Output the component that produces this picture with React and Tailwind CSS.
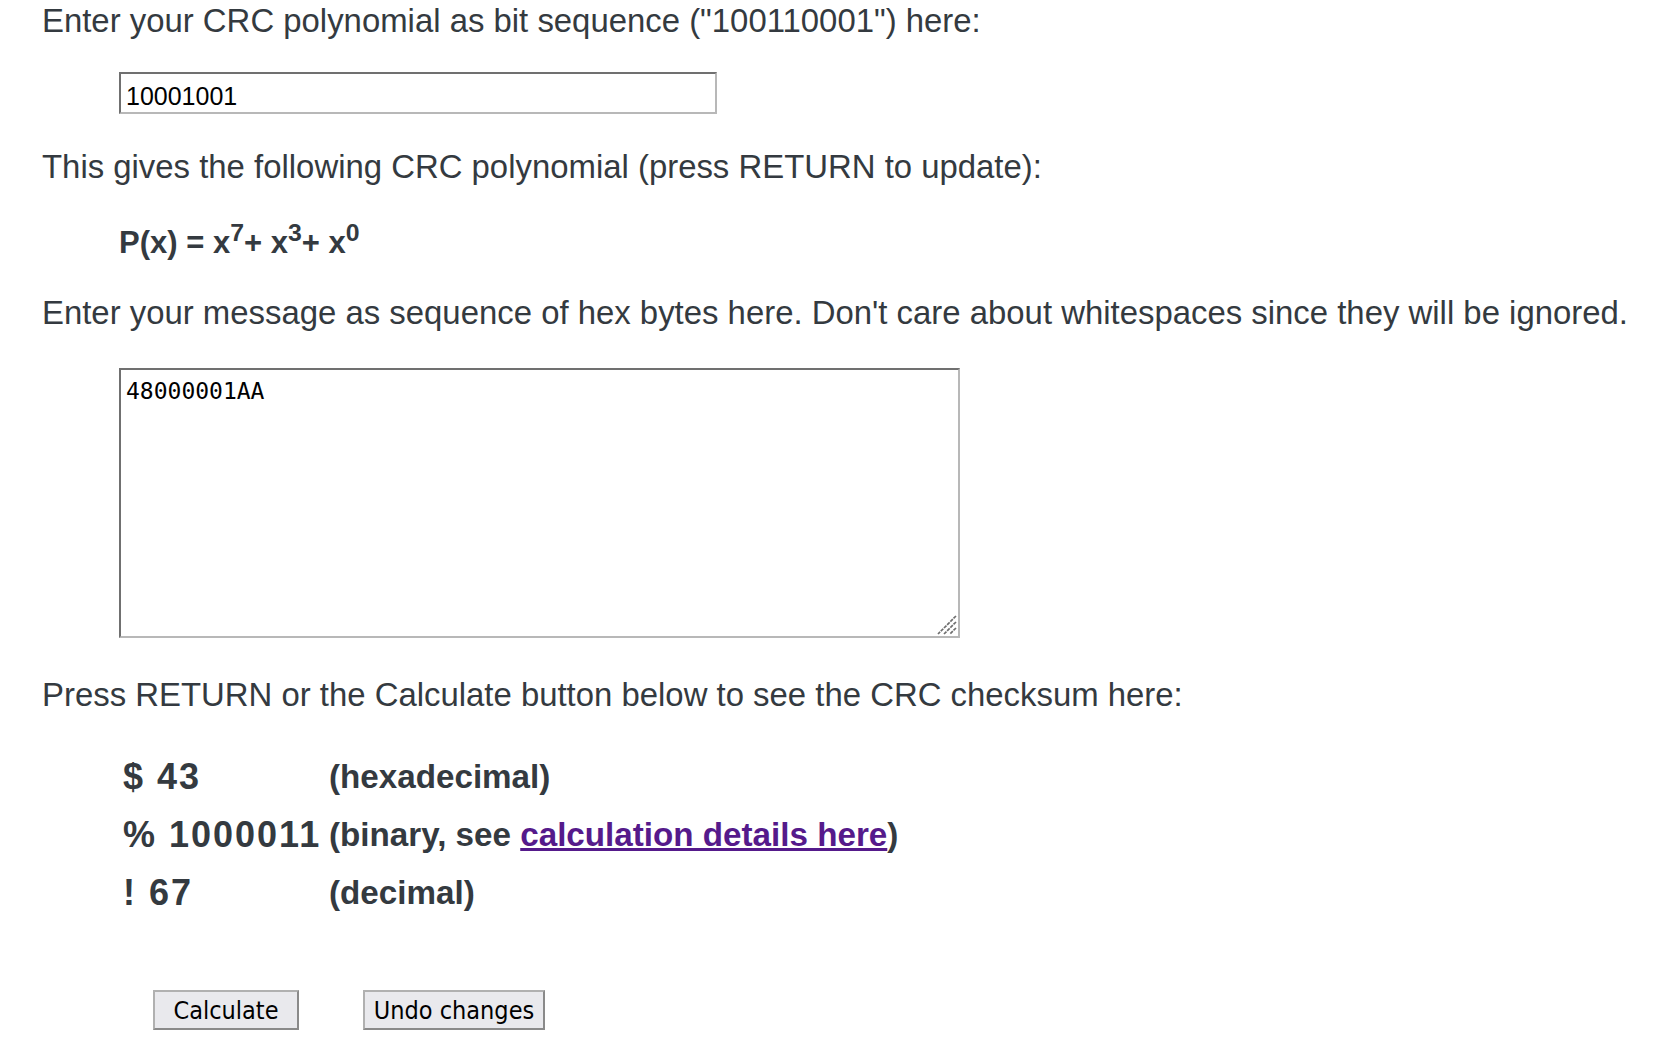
import React, { useState } from 'react';

const results = [
  { prefix: '$ 43', label: '(hexadecimal)' },
  { prefix: '% 1000011', label: 'binary' },
  { prefix: '! 67', label: '(decimal)' },
];

const App = () => {
  const [poly, setPoly] = useState('10001001');
  const [message, setMessage] = useState('48000001AA');

  return (
    <div className="min-h-[1052px] bg-white pl-[42px] pt-[2px] font-['Liberation_Sans',Arial,sans-serif] text-[#343a40]">
      <p className="text-[32.9px] leading-[38px]">
        Enter your CRC polynomial as bit sequence ("100110001") here:
      </p>

      <div className="ml-[77px] mt-[32px]">
        <input
          value={poly}
          onChange={(e) => setPoly(e.target.value)}
          className="block h-[42px] w-[598px] border-2 border-t-[#707070] border-l-[#707070] border-r-[#b8b8b8] border-b-[#b8b8b8] bg-white px-[5px] pt-[7px] text-[25px] text-black outline-none"
        />
      </div>

      <p className="mt-[34px] text-[32.9px] leading-[38px]">
        This gives the following CRC polynomial (press RETURN to update):
      </p>

      <p className="ml-[77px] mt-[38px] text-[31px] font-bold leading-[38px]">
        P(x) = x<sup className="text-[0.8em]">7</sup>+ x<sup className="text-[0.8em]">3</sup>+ x<sup className="text-[0.8em]">0</sup>
      </p>

      <p className="mt-[32px] text-[32.9px] leading-[38px]">
        Enter your message as sequence of hex bytes here. Don't care about whitespaces since they will be ignored.
      </p>

      <div className="relative ml-[77px] mt-[36px] w-[841px]">
        <textarea
          value={message}
          onChange={(e) => setMessage(e.target.value)}
          className="block h-[270px] w-[841px] resize-none border-2 border-t-[#707070] border-l-[#707070] border-r-[#b8b8b8] border-b-[#b8b8b8] bg-white px-[5px] pt-[4px] font-['DejaVu_Sans_Mono',monospace] text-[23px] text-black outline-none"
        />
        {/* resize grip */}
        <svg className="pointer-events-none absolute bottom-[3px] right-[3px]" width="22" height="22" viewBox="0 0 22 22">
          <path d="M21 3 L3 21 M21 9 L9 21 M21 15 L15 21" stroke="#6e6e6e" strokeWidth="1.7" strokeDasharray="3.5 1" />
        </svg>
      </div>

      <p className="mt-[38px] text-[32.9px] leading-[38px]">
        Press RETURN or the Calculate button below to see the CRC checksum here:
      </p>

      {/* Result table */}
      <div className="ml-[81px] mt-[34px] font-bold">
        {results.map((row) => (
          <div key={row.prefix} className="flex h-[58px] items-center whitespace-nowrap">
            <span className="w-[206px] text-[36px] tracking-[2px]">{row.prefix}</span>
            {row.label === 'binary' ? (
              <span className="text-[33.2px]">
                (binary, see{' '}
                <a href="#" className="text-[#551a8b] underline">
                  calculation details here
                </a>
                )
              </span>
            ) : (
              <span className="text-[33.2px]">{row.label}</span>
            )}
          </div>
        ))}
      </div>

      <div className="ml-[111px] mt-[68px] flex gap-[64px] font-['DejaVu_Sans_Condensed','Open_Sans',sans-serif] text-[25px] text-black">
        <button className="h-[40px] w-[146px] border-2 border-t-[#b0b0b0] border-l-[#b0b0b0] border-r-[#8a8a8a] border-b-[#8a8a8a] bg-[#e9e9ed]">Calculate</button>
        <button className="h-[40px] w-[182px] border-2 border-t-[#b0b0b0] border-l-[#b0b0b0] border-r-[#8a8a8a] border-b-[#8a8a8a] bg-[#e9e9ed]">Undo changes</button>
      </div>
    </div>
  );
};

export default App;
